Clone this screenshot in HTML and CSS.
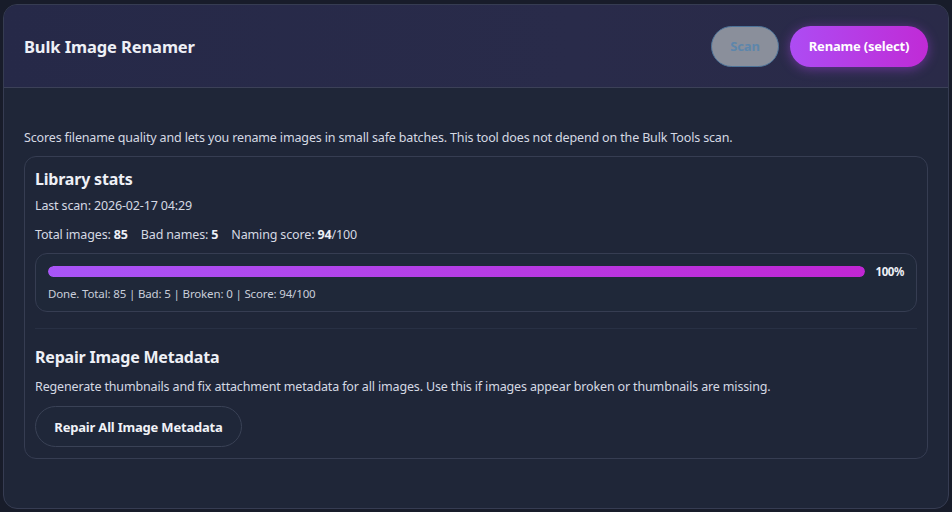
FILE: index.html
```html
<!DOCTYPE html>
<html>
<head>
<meta charset="utf-8">
<link rel="stylesheet" href="styles.css">
</head>
<body>
<div class="card">
  <header class="head">
    <h1 class="title">Bulk Image Renamer</h1>
    <div class="actions">
      <button class="btn btn-scan" disabled>Scan</button>
      <button class="btn btn-primary">Rename (select)</button>
    </div>
  </header>
  <div class="body">
    <p class="desc">Scores filename quality and lets you rename images in small safe batches. This tool does not depend on the Bulk Tools scan.</p>
    <section class="panel">
      <h2 class="h2">Library stats</h2>
      <p class="line">Last scan: 2026-02-17 04:29</p>
      <p class="line stats"><span>Total images: <b>85</b></span><span>Bad names: <b>5</b></span><span>Naming score: <b>94</b>/100</span></p>
      <div class="progress">
        <div class="bar-row">
          <div class="track"><div class="fill" style="width:100%"></div></div>
          <span class="pct">100%</span>
        </div>
        <div class="status">Done. Total: 85 | Bad: 5 | Broken: 0 | Score: 94/100</div>
      </div>
      <hr class="divider">
      <h2 class="h2">Repair Image Metadata</h2>
      <p class="line repair-desc">Regenerate thumbnails and fix attachment metadata for all images. Use this if images appear broken or thumbnails are missing.</p>
      <button class="btn btn-outline">Repair All Image Metadata</button>
    </section>
  </div>
</div>
</body>
</html>
```
FILE: styles.css
```css
* { box-sizing: border-box; }
html, body { margin: 0; padding: 0; }
body {
  background: #181c2a;
  font-family: "Noto Sans", "Open Sans", sans-serif;
  color: #e6e8ee;
  padding: 4px 3px 3px 3px;
}
.card {
  width: 946px;
  height: 505px;
  border: 1px solid #363c52;
  border-radius: 14px;
  background: #1f2638;
  overflow: hidden;
}
.head {
  height: 83px;
  display: flex;
  align-items: center;
  justify-content: space-between;
  padding: 0 20px 0 20px;
  background: linear-gradient(90deg, #262948 0%, #292b4a 60%, #2a2a48 100%);
  border-bottom: 1px solid #3c4158;
}
.title {
  margin: 0;
  font-size: 16.5px;
  font-weight: 700;
  color: #eef0f6;
  letter-spacing: -0.1px;
}
.actions { display: flex; gap: 11px; }
.btn {
  font-family: inherit;
  font-weight: 700;
  font-size: 13px;
  height: 41px;
  border-radius: 21px;
  cursor: pointer;
  letter-spacing: -0.2px;
}
.btn-scan {
  width: 68px;
  background: #8a8f9b;
  border: 1px solid #4d7399;
  color: #5d86ab;
}
.btn-primary {
  width: 138px;
  border: none;
  color: #fff;
  background: linear-gradient(90deg, #ad4cf3 0%, #c02bd6 100%);
  box-shadow: 0 2px 12px rgba(180, 70, 240, 0.45);
}
.body { padding: 41px 20px 20px 20px; }
.desc {
  margin: 0 0 10px 0;
  font-size: 12.5px;
  color: #d5d9e3;
  letter-spacing: -0.15px;
}
.panel {
  border: 1px solid #363d52;
  border-radius: 12px;
  padding: 11px 10px 11px 10px;
}
.h2 {
  margin: 0;
  font-size: 16px;
  font-weight: 700;
  color: #eef0f6;
  letter-spacing: -0.2px;
}
.line {
  margin: 7px 0 0 0;
  font-size: 12.5px;
  color: #d5d9e3;
  letter-spacing: -0.15px;
}
.stats { margin-top: 12px; display: flex; gap: 13px; }
.stats b { color: #eef0f6; }
.repair-desc { margin-top: 10px; }
.progress {
  margin-top: 10px;
  border: 1px solid #363d52;
  border-radius: 12px;
  padding: 10px 12px 10px 12px;
  background: #1f2839;
}
.bar-row { display: flex; align-items: center; gap: 10px; }
.track {
  flex: 1;
  height: 11px;
  border-radius: 6px;
  background: #2b3347;
  overflow: hidden;
}
.fill {
  height: 100%;
  border-radius: 6px;
  background: linear-gradient(90deg, #a855f7 0%, #c026d3 100%);
}
.pct { font-size: 11.5px; font-weight: 700; color: #eef0f6; letter-spacing: -0.4px; }
.status {
  margin-top: 7px;
  font-size: 11.5px;
  color: #c9ceda;
  letter-spacing: -0.15px;
}
.divider {
  margin: 16px 0 17px 0;
  border: none;
  border-top: 1px solid #283044;
}
.btn-outline {
  margin-top: 11px;
  width: 207px;
  height: 41px;
  background: #1f2739;
  border: 1px solid #3a4256;
  color: #f0f2f7;
}
```
